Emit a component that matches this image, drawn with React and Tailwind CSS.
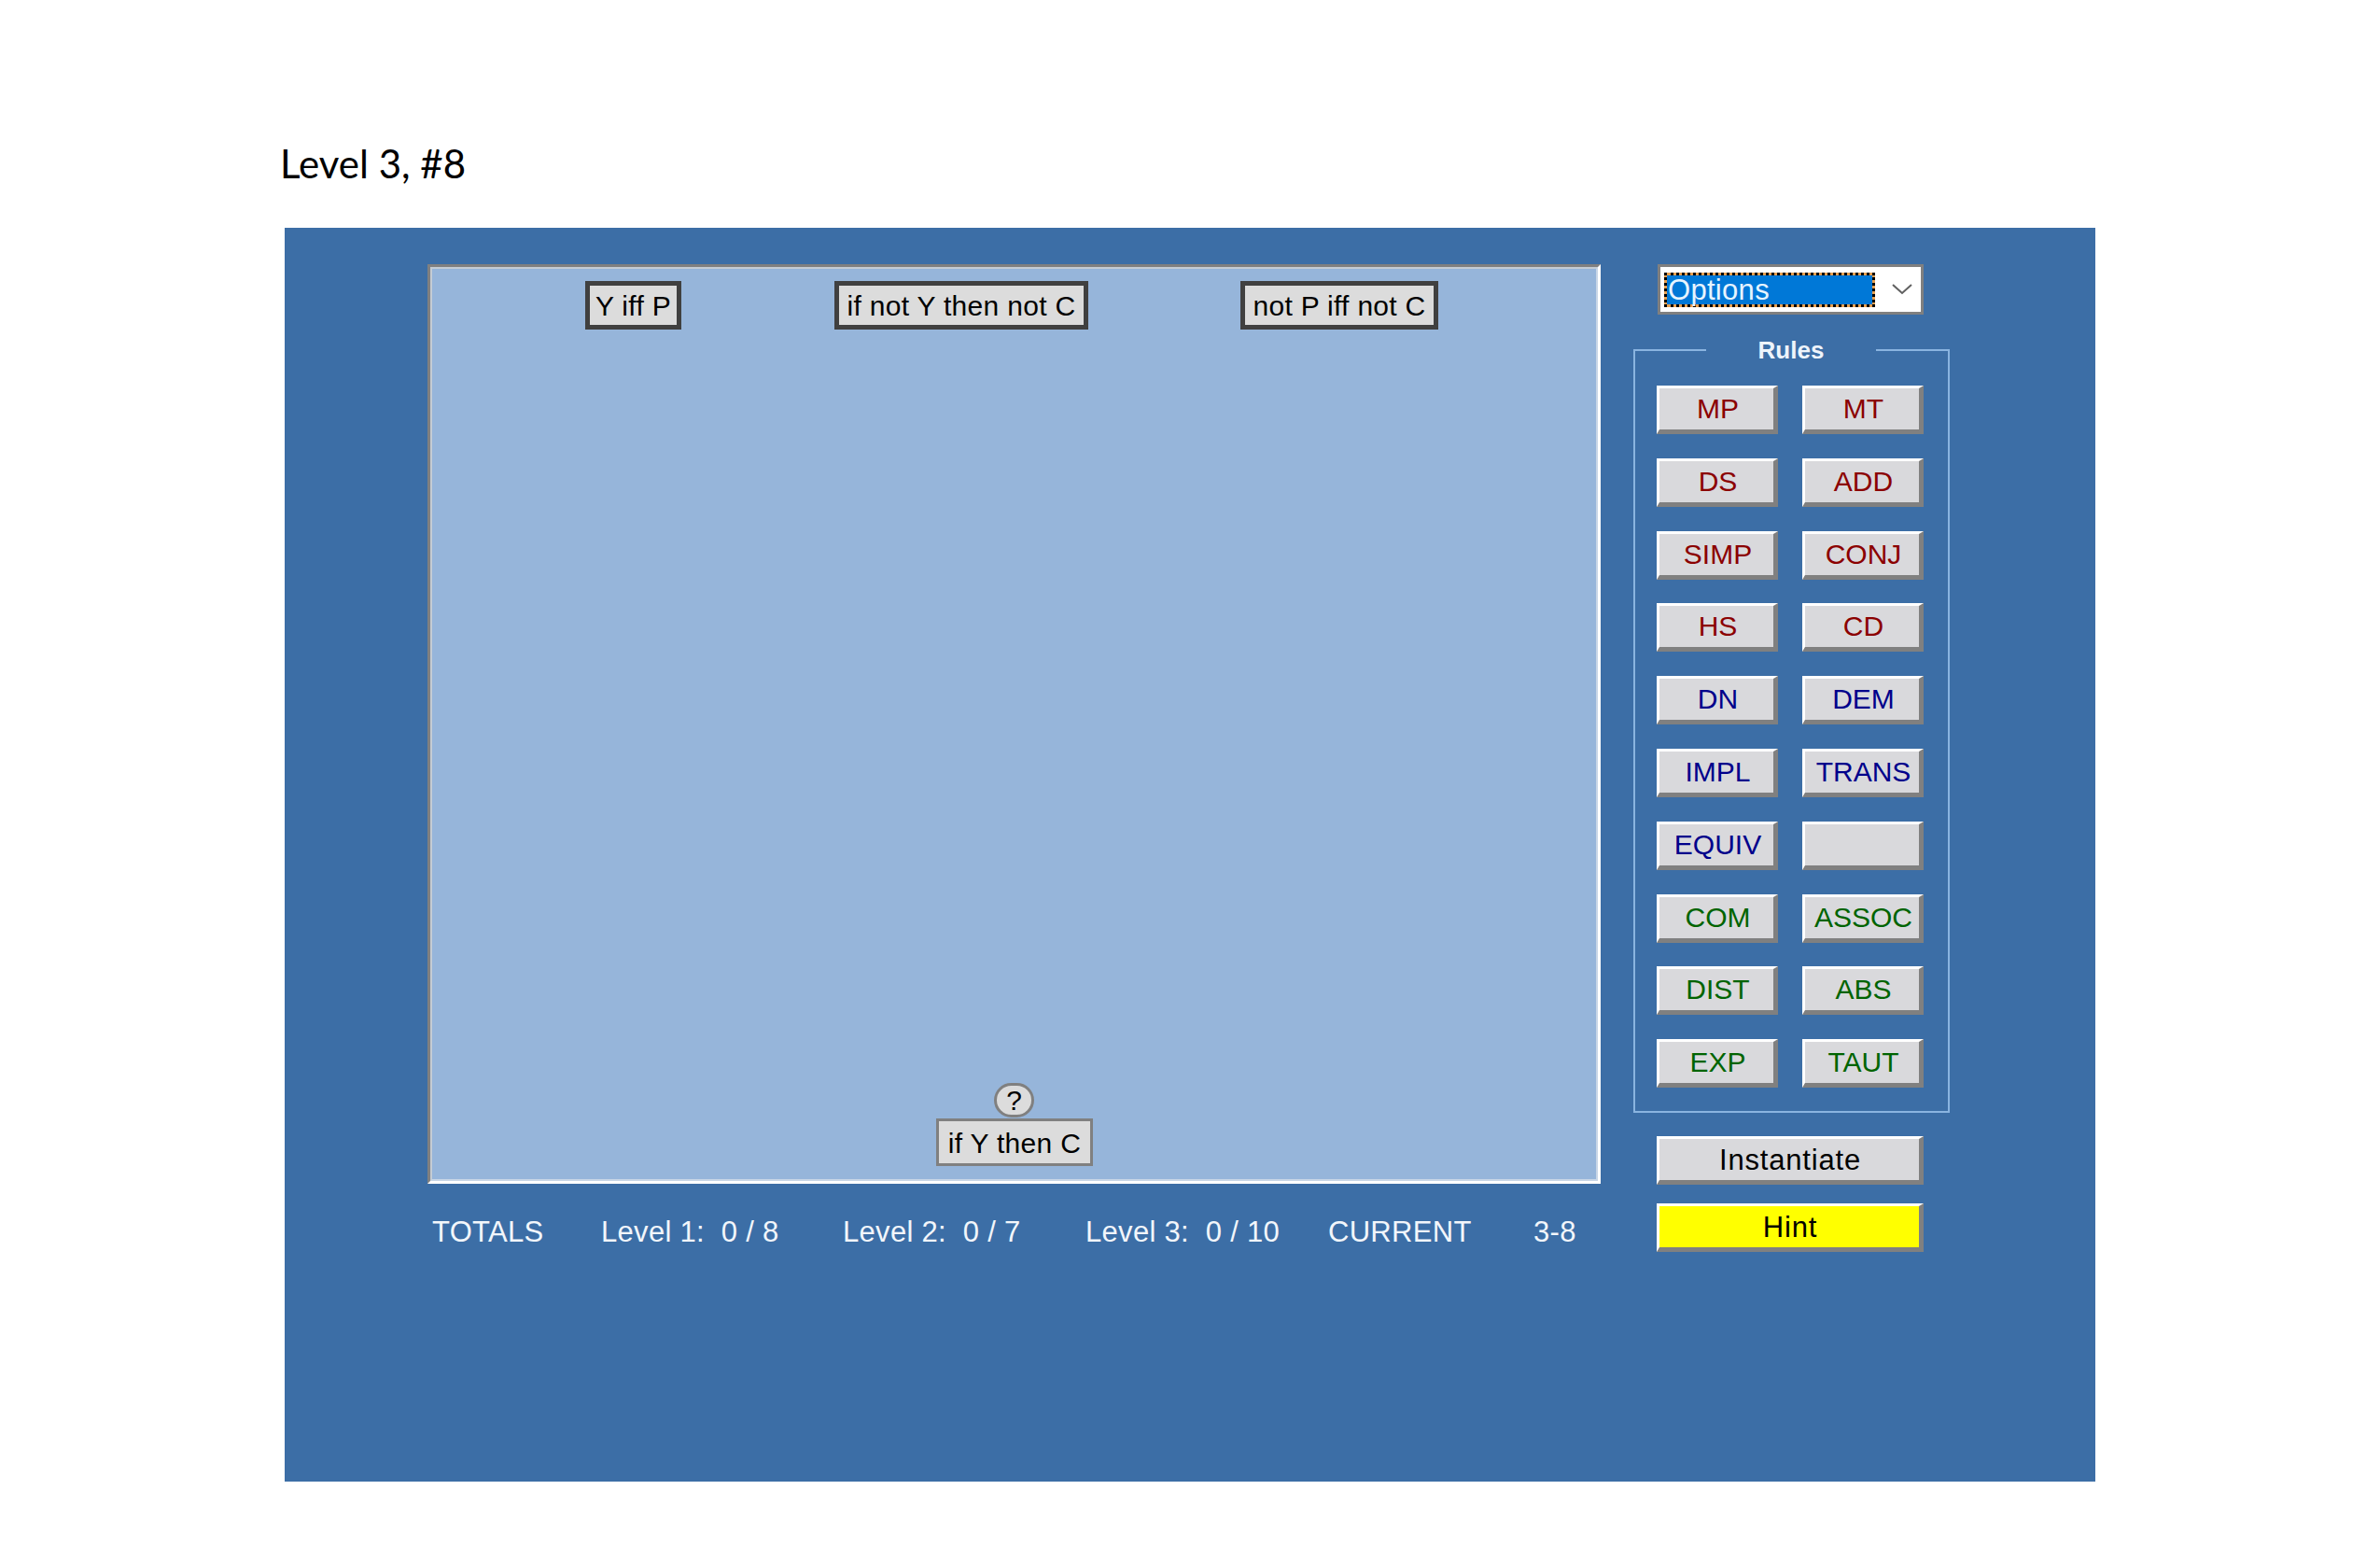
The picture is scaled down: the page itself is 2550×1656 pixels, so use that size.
/**
 * Logic game - Level 3, #8
 */

const RULES = [
  { label: 'MP', color: 'text-[#8b0000]' },
  { label: 'MT', color: 'text-[#8b0000]' },
  { label: 'DS', color: 'text-[#8b0000]' },
  { label: 'ADD', color: 'text-[#8b0000]' },
  { label: 'SIMP', color: 'text-[#8b0000]' },
  { label: 'CONJ', color: 'text-[#8b0000]' },
  { label: 'HS', color: 'text-[#8b0000]' },
  { label: 'CD', color: 'text-[#8b0000]' },
  { label: 'DN', color: 'text-[#00008b]' },
  { label: 'DEM', color: 'text-[#00008b]' },
  { label: 'IMPL', color: 'text-[#00008b]' },
  { label: 'TRANS', color: 'text-[#00008b]' },
  { label: 'EQUIV', color: 'text-[#00008b]' },
  { label: '', color: 'text-[#00008b]' },
  { label: 'COM', color: 'text-[#006400]' },
  { label: 'ASSOC', color: 'text-[#006400]' },
  { label: 'DIST', color: 'text-[#006400]' },
  { label: 'ABS', color: 'text-[#006400]' },
  { label: 'EXP', color: 'text-[#006400]' },
  { label: 'TAUT', color: 'text-[#006400]' },
];

const PREMISES = [
  { label: 'Y iff P', pos: 'left-[164px] w-[103px]' },
  { label: 'if not Y then not C', pos: 'left-[431px] w-[272px]' },
  { label: 'not P iff not C', pos: 'left-[866px] w-[212px]' },
];

const TOTALS = [
  { label: 'TOTALS', width: 'w-[181px]' },
  { label: 'Level 1:  0 / 8', width: 'w-[259px]' },
  { label: 'Level 2:  0 / 7', width: 'w-[260px]' },
  { label: 'Level 3:  0 / 10', width: 'w-[260px]' },
  { label: 'CURRENT', width: 'w-[220px]' },
  { label: '3-8', width: 'w-[46px]' },
];

const bevel =
  'h-[52px] border-t-[3px] border-l-[3px] border-r-[5px] border-b-[5px] border-t-white border-l-white border-r-[#808080] border-b-[#808080] flex items-center justify-center leading-none';

const App = () => {
  return (
    <div className="w-[2550px] h-[1656px] bg-white font-['Liberation_Sans',Arial,sans-serif]">
      <div className="h-[244px] pl-[300px] pt-[149px]">
        <h1 className="font-['Lato',sans-serif] text-[42px] leading-[52px] text-black">Level 3, #8</h1>
      </div>

      <div className="ml-[305px] w-[1940px] h-[1343px] bg-[#3c6ea6] pl-[153px] pt-[39px] flex">
        {/* board and score line */}
        <div className="w-[1257px]">
          <div className="h-[985px] border-[3px] border-t-[#808080] border-l-[#808080] border-r-white border-b-white">
            <div className="relative h-full bg-[#96b5da] border-2 border-t-[#c4ccd4] border-l-[#c4ccd4] border-r-[#c8d6e6] border-b-[#c8d6e6]">
              {PREMISES.map((p) => (
                <div
                  key={p.label}
                  className={`absolute top-[13px] h-[52px] ${p.pos} bg-[#dcdcdc] border-[5px] border-[#404040] flex items-center justify-center pt-[2px] text-[30px] leading-none text-black tracking-[0.3px] whitespace-nowrap`}
                >
                  {p.label}
                </div>
              ))}
              <div className="absolute left-[602px] top-[872px] w-[43px] h-[37px] rounded-full bg-[#dcdcdc] border-[3px] border-[#808080] flex items-center justify-center text-[30px] leading-none text-black">
                ?
              </div>
              <div className="absolute left-[540px] top-[910px] w-[168px] h-[51px] bg-[#dcdcdc] border-[3px] border-[#808080] flex items-center justify-center pt-[2px] text-[30px] leading-none text-black tracking-[0.3px] whitespace-nowrap">
                if Y then C
              </div>
            </div>
          </div>

          <div className="flex items-center pl-[5px] mt-[33px] h-[36px] text-[31px] leading-none text-[#f2f6fb] whitespace-pre tracking-[0.3px]">
            {TOTALS.map((t) => (
              <span key={t.label} className={t.width}>{t.label}</span>
            ))}
          </div>
        </div>

        {/* right column */}
        <div className="ml-[35px] w-[339px]">
          <div className="ml-[26px] w-[285px] h-[54px] bg-white border-[3px] border-[#808080] flex items-center pl-[4px]">
            <div className="w-[226px] h-[37px] bg-[#e8a050] border-[3px] border-dotted border-black">
              <div className="h-full bg-[#0078d7] text-[#e6f4ff] text-[31px] leading-[31px] pl-[1px] tracking-[0.3px]">Options</div>
            </div>
            <svg className="ml-[17px]" width="24" height="14" viewBox="0 0 24 14" fill="none">
              <path d="M2 2 L12 11 L22 2" stroke="#606060" strokeWidth="2" />
            </svg>
          </div>

          <fieldset className="mt-[23px] border-2 border-[#8ab4e0] pl-[23px] pr-[24px] pt-[23px] pb-[25px]">
            <legend className="mx-auto px-[56px] h-[30px] text-[26px] leading-[30px] font-bold text-[#eef4fb]">Rules</legend>
            <div className="grid grid-cols-[130px_130px] gap-x-[26px] gap-y-[25.8px]">
              {RULES.map((r, i) => (
                <button key={i} type="button" className={`${bevel} pl-[3px] text-[30px] bg-[#d9d9dc] ${r.color}`}>
                  {r.label}
                </button>
              ))}
            </div>
          </fieldset>

          <div className="ml-[25px] w-[286px] mt-[25px] flex flex-col gap-[20px]">
            <button type="button" className={`${bevel} pl-[2px] text-[31px] tracking-[0.8px] bg-[#d9d9dc] text-black`}>Instantiate</button>
            <button type="button" className={`${bevel} pl-[2px] text-[31px] tracking-[0.8px] bg-[#ffff00] text-black`}>Hint</button>
          </div>
        </div>
      </div>
    </div>
  );
};

export default App;
